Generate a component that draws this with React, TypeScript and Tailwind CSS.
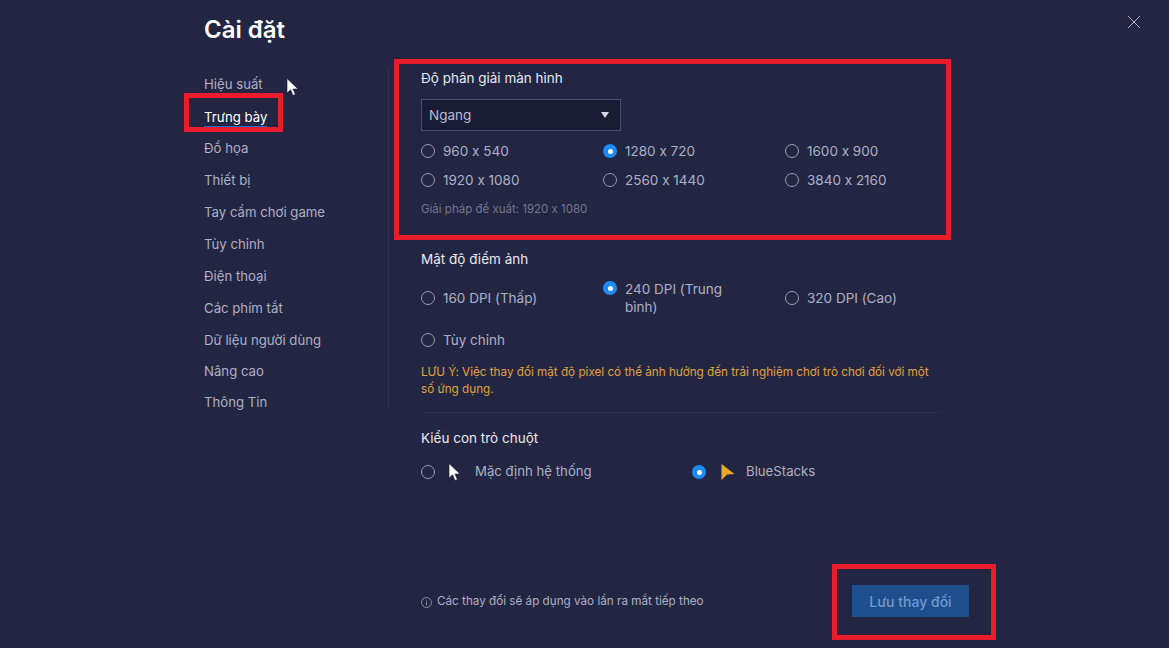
const navItems = [
  "Hiệu suất",
  "Trưng bày",
  "Đồ họa",
  "Thiết bị",
  "Tay cầm chơi game",
  "Tùy chỉnh",
  "Điện thoại",
  "Các phím tắt",
  "Dữ liệu người dùng",
];

const resolutions = [
  ["960 x 540", false],
  ["1280 x 720", true],
  ["1600 x 900", false],
  ["1920 x 1080", false],
  ["2560 x 1440", false],
  ["3840 x 2160", false],
] as const;

function Radio({ checked }: { checked?: boolean }) {
  if (checked) {
    return (
      <span className="flex h-[14px] w-[14px] shrink-0 items-center justify-center rounded-full bg-[#1c8bf5]">
        <span className="h-[5px] w-[5px] rounded-full bg-white" />
      </span>
    );
  }
  return <span className="h-[14px] w-[14px] shrink-0 rounded-full border border-[#9a9db4]" />;
}

function Option({ label, checked }: { label: string; checked?: boolean }) {
  return (
    <div className="flex items-center gap-2 text-[13.5px] text-[#aeb0c6]">
      <Radio checked={checked} />
      <span>{label}</span>
    </div>
  );
}

function ArrowCursor({ fill }: { fill: string }) {
  return (
    <svg width="14" height="18" viewBox="0 0 14 18" aria-hidden="true">
      <path d="M1 0.5 L1 15 L4.6 11.8 L7 17.5 L9.4 16.4 L7 11 L12 11 Z" fill={fill} stroke="#15172b" strokeWidth="0.6" />
    </svg>
  );
}

export default function App() {
  return (
    <div className="relative flex h-[648px] w-[1169px] overflow-hidden bg-[#232642] pl-[204px] font-['Inter',sans-serif] [font-feature-settings:'calt'_0]">
      <aside className="w-[184px] shrink-0">
        <h1 className="mt-[14px] h-[32px] text-[24px] font-semibold leading-[32px] text-white">Cài đặt</h1>
        <nav className="mt-[23px]">
          {navItems.map((item) => (
            <div key={item} className="flex h-[32px] items-center text-[13.2px] text-[#aeb0c6]">
              {item === "Trưng bày" ? (
                <span className="border-b border-[#1c6fd0] leading-[18px] text-white">{item}</span>
              ) : (
                item
              )}
            </div>
          ))}
          <div className="flex h-[30px] items-center text-[13.2px] text-[#aeb0c6]">Nâng cao</div>
          <div className="flex h-[32px] items-center text-[13.2px] text-[#aeb0c6]">Thông Tin</div>
        </nav>
      </aside>

      <main className="mt-[68px] h-[340px] w-[554px] shrink-0 border-l border-[#2f3350] pl-[32px]">
        <h2 className="h-[20px] text-[13.5px] leading-[20px] text-[#e8e9f2]">Độ phân giải màn hình</h2>
        <div className="mt-[11px] flex h-[32px] w-[200px] items-center justify-between border border-[#4a4e6e] bg-[#1a1c36] pl-[7px] pr-[11px] text-[13.5px] text-[#b9bbd0]">
          <span>Ngang</span>
          <span className="h-0 w-0 border-x-[4.5px] border-t-[6px] border-x-transparent border-t-[#d5d6e2]" />
        </div>
        <div className="mt-[10px] grid w-[546px] grid-cols-3 gap-y-[9px]">
          {resolutions.map(([label, checked]) => (
            <div key={label} className="h-[20px]">
              <Option label={label} checked={checked} />
            </div>
          ))}
        </div>
        <p className="mt-[10px] h-[18px] text-[11.5px] leading-[18px] text-[#72758e]">Giải pháp đề xuất: 1920 x 1080</p>

        <h2 className="mt-[31px] h-[20px] text-[13.5px] leading-[20px] text-[#e8e9f2]">Mật độ điểm ảnh</h2>
        <div className="mt-[11px] grid w-[546px] grid-cols-3 items-center">
          <Option label="160 DPI (Thấp)" />
          <div className="flex gap-2 text-[13.5px] leading-[18px] text-[#aeb0c6]">
            <span className="mt-[1px]">
              <Radio checked />
            </span>
            <span className="w-[112px]">240 DPI (Trung bình)</span>
          </div>
          <Option label="320 DPI (Cao)" />
        </div>
        <div className="mt-[14px]">
          <Option label="Tùy chỉnh" />
        </div>
        <p className="mt-[14px] w-[520px] text-[11.7px] leading-[17px] text-[#e0a23c]">
          LƯU Ý: Việc thay đổi mật độ pixel có thể ảnh hưởng đến trải nghiệm chơi trò chơi đối với một số ứng dụng.
        </p>
        <div className="mt-[14px] w-[520px] border-t border-[#2c2f4d]" />

        <h2 className="mt-[15px] h-[20px] text-[13.5px] leading-[20px] text-[#e8e9f2]">Kiểu con trỏ chuột</h2>
        <div className="mt-[14px] flex h-[20px] items-center text-[13.2px] text-[#aeb0c6]">
          <Radio />
          <span className="ml-[13px] w-[14px]">
            <ArrowCursor fill="#ffffff" />
          </span>
          <span className="ml-[13px] w-[217px]">Mặc định hệ thống</span>
          <Radio checked />
          <span className="ml-[15px] w-[13px]">
            <svg width="14" height="16" viewBox="0 0 14 16" aria-hidden="true">
              <path d="M0.5 0 L13.5 10 L6 10.5 L0.5 16 Z" fill="#eba925" />
            </svg>
          </span>
          <span className="ml-[12px]">BlueStacks</span>
        </div>

        <div className="mt-[103px] flex h-[32px] w-[548px] items-center justify-between">
          <div className="flex items-center gap-[5px] pt-[2px] text-[11.7px] text-[#aeb0c6]">
            <svg width="11" height="11" viewBox="0 0 12 12" fill="none" stroke="#aeb0c6" aria-hidden="true">
              <circle cx="6" cy="6" r="5.4" strokeWidth="0.8" />
              <path d="M6 5.2V9M6 3V4" strokeWidth="0.9" />
            </svg>
            <span>Các thay đổi sẽ áp dụng vào lần ra mắt tiếp theo</span>
          </div>
          <button className="h-[32px] w-[117px] bg-[#1f4e8c] text-[14px] font-medium text-[#6f9ad3]">Lưu thay đổi</button>
        </div>
      </main>

      <svg className="absolute left-[1127px] top-[15px]" width="14" height="14" viewBox="0 0 14 14" stroke="#a9abc4" aria-hidden="true">
        <path d="M1 1L13 13M13 1L1 13" strokeWidth="1" />
      </svg>
      <span className="absolute left-[286px] top-[78px]">
        <ArrowCursor fill="#ffffff" />
      </span>
      <div className="absolute left-[184px] top-[93px] h-[39px] w-[99px] border-[5px] border-[#e81c2b]" />
      <div className="absolute left-[394px] top-[59px] h-[181px] w-[557px] border-[5px] border-[#e81c2b]" />
      <div className="absolute left-[832px] top-[564px] h-[76px] w-[164px] border-[5px] border-[#e81c2b]" />
    </div>
  );
}
